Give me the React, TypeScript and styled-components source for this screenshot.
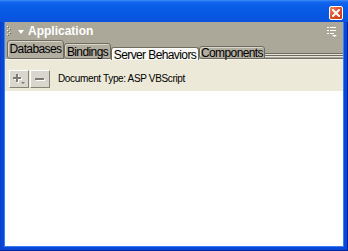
import styled, { createGlobalStyle } from "styled-components";

const GlobalStyle = createGlobalStyle`
  html, body {
    margin: 0;
    padding: 0;
    overflow: hidden;
    background: #ffffff;
  }
  * {
    box-sizing: border-box;
  }
`;

type TabInfo = {
  label: string;
  width: number;
  height: number;
  offset: number;
  active?: boolean;
};

const tabs: TabInfo[] = [
  { label: "Databases", width: 57, height: 19, offset: 2 },
  { label: "Bindings", width: 47, height: 16, offset: 2 },
  { label: "Server Behaviors", width: 88, height: 13, offset: 1, active: true },
  { label: "Components", width: 66, height: 13, offset: 0 },
];

function Gripper() {
  const dots = [0, 1, 2, 3, 4];
  return (
    <svg width="5" height="12" viewBox="0 0 5 12">
      {dots.map((i) => (
        <g key={i}>
          <rect x={i % 2 === 0 ? 0 : 2} y={i * 2 + 1} width="1" height="1" fill="#f4f3ee" />
          <rect x={i % 2 === 0 ? 1 : 3} y={i * 2 + 2} width="1" height="1" fill="#6d6a5e" />
        </g>
      ))}
    </svg>
  );
}

function MenuGlyph() {
  return (
    <svg width="10" height="10" viewBox="0 0 10 10">
      <rect x="0" y="0" width="2" height="1" fill="#fff" />
      <rect x="3" y="0" width="6" height="1" fill="#fff" />
      <rect x="0" y="3" width="2" height="1" fill="#fff" />
      <rect x="3" y="3" width="6" height="1" fill="#fff" />
      <rect x="0" y="6" width="2" height="1" fill="#fff" />
      <rect x="3" y="6" width="4" height="1" fill="#fff" />
      <polygon points="5,8 10,8 7.5,10" fill="#fff" />
    </svg>
  );
}

function PlusGlyph() {
  return (
    <svg width="14" height="12" viewBox="0 0 14 12">
      <rect x="4" y="1" width="2" height="8" fill="#ffffff" transform="translate(1 1)" />
      <rect x="1" y="4" width="8" height="2" fill="#ffffff" transform="translate(1 1)" />
      <rect x="4" y="1" width="2" height="8" fill="#7b7a74" />
      <rect x="1" y="4" width="8" height="2" fill="#7b7a74" />
      <polygon points="9,9 13,9 11,11" fill="#7b7a74" />
    </svg>
  );
}

function MinusGlyph() {
  return (
    <svg width="12" height="4" viewBox="0 0 12 4">
      <rect x="2" y="2" width="9" height="2" fill="#ffffff" />
      <rect x="1" y="1" width="9" height="2" fill="#7b7a74" />
    </svg>
  );
}

export default function App() {
  return (
    <>
      <GlobalStyle />
      <Frame>
        <TitleBar>
          <CloseButton aria-label="Close">
            <svg width="8" height="8" viewBox="0 0 8 8">
              <path d="M1 1 L7 7 M7 1 L1 7" stroke="#fff" strokeWidth="2" strokeLinecap="square" />
            </svg>
          </CloseButton>
        </TitleBar>
        <Body>
          <PanelHeader>
            <Gripper />
            <Caret />
            <PanelTitle>Application</PanelTitle>
            <MenuButton>
              <MenuGlyph />
            </MenuButton>
          </PanelHeader>
          <TabStrip>
            {tabs.map((t) => (
              <Tab
                key={t.label}
                $w={t.width}
                $h={t.height}
                $pad={t.offset}
                $active={t.active}
              >
                {t.label}
              </Tab>
            ))}
            <TabFiller />
          </TabStrip>
          <Toolbar>
            <ToolButton>
              <PlusGlyph />
            </ToolButton>
            <ToolButton>
              <MinusGlyph />
            </ToolButton>
            <DocType>Document Type: ASP VBScript</DocType>
          </Toolbar>
          <Content />
        </Body>
      </Frame>
    </>
  );
}

const Frame = styled.div`
  width: 348px;
  height: 251px;
  display: flex;
  flex-direction: column;
  padding: 0 4px 4px 4px;
  background: #0846d8;
  box-shadow: inset -1px -1px 0 #00249c, inset 1px 0 0 #0a3fc8;
`;

const TitleBar = styled.div`
  height: 22px;
  margin: 0 -4px;
  display: flex;
  align-items: flex-start;
  justify-content: flex-end;
  padding: 6px 5px 0 0;
  background: linear-gradient(
    to bottom,
    #3d8df6 0,
    #1466ee 2px,
    #0a5de8 6px,
    #0757e3 16px,
    #0a52dc 22px
  );
`;

const CloseButton = styled.button`
  width: 14px;
  height: 14px;
  padding: 0;
  border: 1px solid #ffffff;
  border-radius: 2px;
  background: linear-gradient(135deg, #f08a6a 0, #e0502c 45%, #c83a18 100%);
  display: flex;
  align-items: center;
  justify-content: center;
`;

const Body = styled.div`
  flex: 1;
  display: flex;
  flex-direction: column;
  border: 1px solid #3a7df2;
  border-top: none;
  background: #ffffff;
  font-family: "Liberation Sans", Arial, sans-serif;
`;

const PanelHeader = styled.div`
  height: 18px;
  display: flex;
  align-items: center;
  padding: 0 6px 0 2px;
  background: #aca899;
`;

const Caret = styled.span`
  width: 0;
  height: 0;
  margin: 1px 4px 0 6px;
  border-left: 3.5px solid transparent;
  border-right: 3.5px solid transparent;
  border-top: 4px solid #ffffff;
`;

const PanelTitle = styled.span`
  color: #ffffff;
  font-size: 12px;
  font-weight: bold;
  line-height: 14px;
`;

const MenuButton = styled.span`
  margin-left: auto;
  display: flex;
  margin-top: 1px;
`;

const TabStrip = styled.div`
  height: 20px;
  display: flex;
  align-items: flex-end;
  padding-left: 2px;
  background: #aca899;
  border-bottom: 1px solid #f4f3ee;
`;

const Tab = styled.div<{ $w: number; $h: number; $pad: number; $active?: boolean }>`
  width: ${(p) => p.$w}px;
  height: ${(p) => p.$h}px;
  flex-shrink: 0;
  margin-bottom: ${(p) => (p.$active ? "-1px" : "0")};
  padding: ${(p) => p.$pad}px 0 0 0;
  border: 1px solid #6f6c60;
  border-bottom: ${(p) => (p.$active ? "none" : "1px solid #6f6c60")};
  border-radius: 3px 3px 0 ${(p) => (p.$active ? "0" : "3px")};
  background: ${(p) => (p.$active ? "#f6f5ef" : "#b1ad9f")};
  box-shadow: inset 1px 1px 0 ${(p) => (p.$active ? "#ffffff" : "#d8d5ca")};
  color: #000000;
  font-size: 12px;
  letter-spacing: -0.6px;
  line-height: 12px;
  text-align: center;
  white-space: nowrap;
  overflow: visible;
`;

const TabFiller = styled.div`
  flex: 1;
  height: 6px;
  background: linear-gradient(
    to bottom,
    #6f6c60 0 1px,
    #e6e4da 1px 2px,
    #6f6c60 2px 3px,
    #e6e4da 3px 4px,
    #aca899 4px 5px,
    #6f6c60 5px 6px
  );
`;

const Toolbar = styled.div`
  height: 31px;
  display: flex;
  align-items: flex-start;
  gap: 1px;
  padding: 10px 0 0 4px;
  background: #ece9d8;
`;

const ToolButton = styled.div`
  width: 20px;
  height: 18px;
  display: flex;
  align-items: center;
  justify-content: center;
  background: #d9d6cd;
  border: 1px solid;
  border-color: #ffffff #858276 #858276 #ffffff;
`;

const DocType = styled.span`
  margin-left: 7px;
  font-size: 10px;
  letter-spacing: -0.35px;
  line-height: 18px;
  color: #000000;
`;

const Content = styled.div`
  flex: 1;
  background: #ffffff;
`;
